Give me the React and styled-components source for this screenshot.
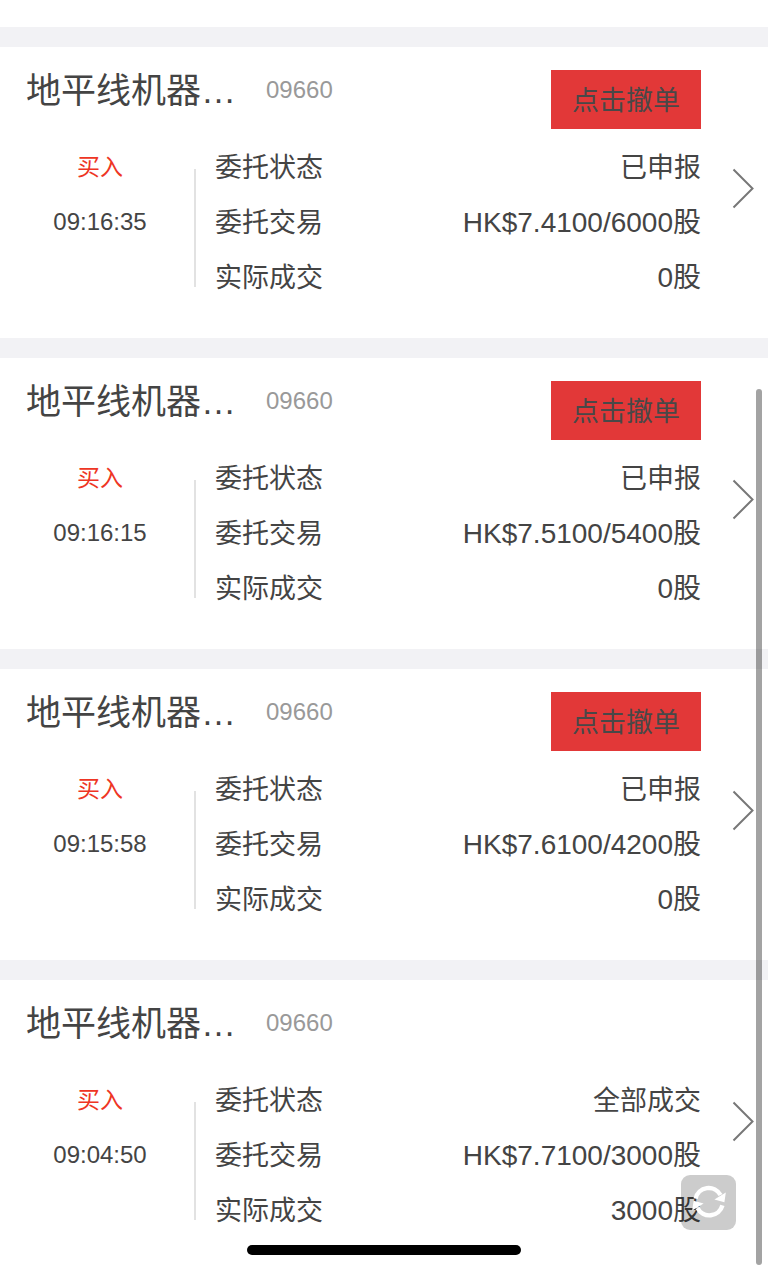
import React from "react";
import styled, { createGlobalStyle } from "styled-components";

const GlobalStyle = createGlobalStyle`
  * { box-sizing: border-box; }
  body {
    margin: 0;
    background: #fff;
    color: #444;
    font-family: "Liberation Sans", "Noto Sans CJK SC", sans-serif;
    font-size: 27px;
  }
`;

const Page = styled.main`
  padding-top: 27px;
`;

const OrderCard = styled.article`
  border-top: 20px solid #f2f2f5;
  padding-bottom: 32px;
`;

const CardHeader = styled.header`
  display: flex;
  align-items: flex-start;
  min-height: 93px;
  padding: 23px 67px 0 26px;
`;

const StockName = styled.h2`
  margin: 0;
  width: 240px;
  font-size: 35px;
  font-weight: 400;
  line-height: 41px;
  white-space: nowrap;
`;

const StockCode = styled.span`
  color: #999;
  font-size: 24px;
  line-height: 40px;
`;

const CancelButton = styled.button`
  margin-left: auto;
  width: 150px;
  height: 59px;
  padding: 0 0 2px;
  border: 0;
  background: #e23838;
  color: #484848;
  font: inherit;
  cursor: pointer;
`;

const CardBody = styled.div`
  display: flex;
  align-items: flex-start;
`;

const SideColumn = styled.div`
  width: 200px;
  text-align: center;
`;

const Side = styled.div`
  color: #ee3524;
  font-size: 23px;
  line-height: 55px;
`;

const Time = styled.time`
  display: block;
  font-size: 24px;
  line-height: 53px;
`;

const Divider = styled.div`
  align-self: stretch;
  width: 2px;
  margin: 29px 0 19px -6px;
  background: #e2e2e2;
`;

const Details = styled.dl`
  flex: 1;
  margin: 0;
  padding: 1px 0 0 19px;
`;

const DetailRow = styled.div`
  display: flex;
  align-items: flex-start;
  justify-content: space-between;
  line-height: 55px;
`;

const Label = styled.dt``;

const Value = styled.dd`
  margin: 0;
  font-size: ${(p) => (p.$numeric ? 28 : 27)}px;
  line-height: ${(p) => (p.$numeric ? 53 : 55)}px;
`;

const DetailLink = styled.a`
  display: flex;
  justify-content: flex-end;
  width: 67px;
  padding: 28px 14px 0 0;
`;

const ScrollThumb = styled.div`
  position: fixed;
  top: 389px;
  right: 6px;
  bottom: 7px;
  width: 6px;
  border-radius: 3px;
  background: rgba(0, 0, 0, 0.36);
`;

const RefreshButton = styled.button`
  position: fixed;
  right: 32px;
  bottom: 42px;
  width: 55px;
  height: 55px;
  padding: 0;
  border: 0;
  border-radius: 9px;
  background: rgba(0, 0, 0, 0.2);
  cursor: pointer;

  svg { display: block; }
`;

const HomeIndicator = styled.div`
  position: fixed;
  left: 50%;
  bottom: 17px;
  width: 274px;
  height: 10px;
  border-radius: 5px;
  background: #000;
  transform: translateX(-50%);
`;

const orders = [
  { time: "09:16:35", status: "已申报", trade: "HK$7.4100/6000股", filled: "0股", open: true },
  { time: "09:16:15", status: "已申报", trade: "HK$7.5100/5400股", filled: "0股", open: true },
  { time: "09:15:58", status: "已申报", trade: "HK$7.6100/4200股", filled: "0股", open: true },
  { time: "09:04:50", status: "全部成交", trade: "HK$7.7100/3000股", filled: "3000股", open: false },
];

function Order({ order }) {
  return (
    <OrderCard>
      <CardHeader>
        <StockName>地平线机器…</StockName>
        <StockCode>09660</StockCode>
        {order.open && <CancelButton type="button">点击撤单</CancelButton>}
      </CardHeader>
      <CardBody>
        <SideColumn>
          <Side>买入</Side>
          <Time>{order.time}</Time>
        </SideColumn>
        <Divider />
        <Details>
          <DetailRow>
            <Label>委托状态</Label>
            <Value>{order.status}</Value>
          </DetailRow>
          <DetailRow>
            <Label>委托交易</Label>
            <Value $numeric>{order.trade}</Value>
          </DetailRow>
          <DetailRow>
            <Label>实际成交</Label>
            <Value $numeric>{order.filled}</Value>
          </DetailRow>
        </Details>
        <DetailLink href="#order" aria-label="查看详情">
          <svg width="22" height="42" viewBox="0 0 22 42" fill="none" stroke="#777" strokeWidth="2">
            <path d="M1.5 1.5 20.5 20.5 1.5 39.5" />
          </svg>
        </DetailLink>
      </CardBody>
    </OrderCard>
  );
}

export default function App() {
  return (
    <>
      <GlobalStyle />
      <Page>
        {orders.map((order) => (
          <Order key={order.time} order={order} />
        ))}
      </Page>
      <RefreshButton type="button" aria-label="刷新">
        <svg width="55" height="55" viewBox="0 0 55 55" fill="none">
          <g stroke="#fff" strokeWidth="4.4">
            <path d="M14.6 23.6A13.4 13.4 0 0 1 39.5 20" />
            <path d="M41.4 30.4A13.4 13.4 0 0 1 16.5 33" />
          </g>
          <path fill="#fff" d="M44.8 17.6 43.4 27.3 33.4 24.6ZM11.2 35.4 12.6 25.7 22.6 28.4Z" />
        </svg>
      </RefreshButton>
      <ScrollThumb />
      <HomeIndicator />
    </>
  );
}
